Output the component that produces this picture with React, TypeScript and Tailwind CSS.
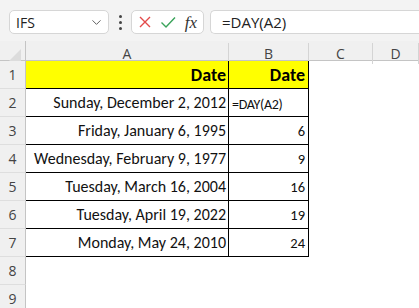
import { ChevronDown } from "lucide-react";

const rows = [
  { date: "Sunday, December 2, 2012", day: "=DAY(A2)" },
  { date: "Friday, January 6, 1995", day: "6" },
  { date: "Wednesday, February 9, 1977", day: "9" },
  { date: "Tuesday, March 16, 2004", day: "16" },
  { date: "Tuesday, April 19, 2022", day: "19" },
  { date: "Monday, May 24, 2010", day: "24" },
];

const grid = "grid grid-cols-[26px_203px_80px_64px_1fr]";
const cellFont = "font-['Carlito','Lato',sans-serif]";

function RowHead({ n }: { n: number }) {
  return (
    <div className="flex items-end justify-center pb-[3px] bg-[#f0f0f0] border-r border-r-[#c4c4c4] border-b border-b-[#dedede] text-[14px] text-[#444] font-['Segoe_UI','Open_Sans',sans-serif]">
      {n}
    </div>
  );
}

export default function App() {
  return (
    <div className="w-[419px] h-[308px] overflow-hidden bg-white">
      {/* formula bar */}
      <div className="h-[41px] bg-[#f3f3f3] flex items-start pt-[10px] pl-[9px] gap-[6px] font-['Segoe_UI','Open_Sans',sans-serif] text-[14px] text-[#222]">
        <div className="w-[100px] h-[24px] bg-white border border-[#d6d6d6] rounded-[5px] flex items-center justify-between pl-[6px] pr-[4px]">
          <span>IFS</span>
          <ChevronDown size={15} strokeWidth={1.5} className="text-[#555]" />
        </div>
        <div className="w-[10px] flex flex-col items-center gap-[3px] pt-[5px]">
          <span className="w-[3px] h-[3px] bg-[#444] rounded-full" />
          <span className="w-[3px] h-[3px] bg-[#444] rounded-full" />
          <span className="w-[3px] h-[3px] bg-[#444] rounded-full" />
        </div>
        <div className="w-[73px] h-[24px] bg-white border border-[#d6d6d6] rounded-[5px] flex items-center justify-between px-[6px]">
          <svg width="14" height="14" viewBox="0 0 14 14">
            <path d="M2 2L12 12M12 2L2 12" stroke="#e34a4a" strokeWidth="1.4" fill="none" />
          </svg>
          <svg width="16" height="14" viewBox="0 0 16 14">
            <path d="M1.5 7.5L6 12L15 2.5" stroke="#3aa35a" strokeWidth="1.4" fill="none" />
          </svg>
          <span className="italic text-[17px] leading-none font-['Liberation_Serif',serif] text-[#333]">fx</span>
        </div>
        <div className="flex-1 h-[24px] bg-white border border-r-0 border-[#d6d6d6] rounded-l-[5px] flex items-center pl-[11px] text-[15px]">
          =DAY(A2)
        </div>
      </div>

      {/* column headers */}
      <div className={`${grid} h-[20px] bg-[#f0f0f0] border-b border-[#c4c4c4] text-[14px] text-[#444] font-['Segoe_UI','Open_Sans',sans-serif]`}>
        <div className="border-r border-[#c4c4c4] flex items-end justify-end pr-[4px] pb-[3px]">
          <svg width="12" height="12" viewBox="0 0 12 12">
            <path d="M12 0V12H0Z" fill="#dcdcdc" />
          </svg>
        </div>
        {["A", "B", "C", "D"].map((c) => (
          <div key={c} className="flex items-center justify-center border-r border-[#d4d4d4] mt-[2px]">
            {c}
          </div>
        ))}
      </div>

      {/* header row */}
      <div className={`${grid} h-[28px]`}>
        <RowHead n={1} />
        <div className={`bg-[#ffff00] border-b border-r border-black flex items-end justify-end pr-[2px] pb-[4px] font-bold text-[18px] leading-none ${cellFont}`}>
          Date
        </div>
        <div className={`bg-[#ffff00] border-b border-r border-black flex items-end justify-end pr-[3px] pb-[4px] font-bold text-[18px] leading-none ${cellFont}`}>
          Date
        </div>
        <div />
        <div />
      </div>

      {rows.map((r, i) => (
        <div key={i} className={`${grid} h-[28px]`}>
          <RowHead n={i + 2} />
          <div className={`border-b border-r border-black flex items-center justify-end pr-[2px] text-[16px] text-[#111] ${cellFont}`}>
            {r.date}
          </div>
          <div
            className={`border-b border-r border-black flex items-end pb-[1px] text-[#111] ${cellFont} ${
              i === 0 ? "justify-start pl-[3px] text-[14px] tracking-[-0.3px]" : "justify-end pr-[3px] text-[14.5px]"
            }`}
          >
            {r.day}
          </div>
          <div />
          <div />
        </div>
      ))}

      {[8, 9].map((n) => (
        <div key={n} className={`${grid} h-[28px]`}>
          <RowHead n={n} />
          <div />
          <div />
          <div />
          <div />
        </div>
      ))}
    </div>
  );
}
